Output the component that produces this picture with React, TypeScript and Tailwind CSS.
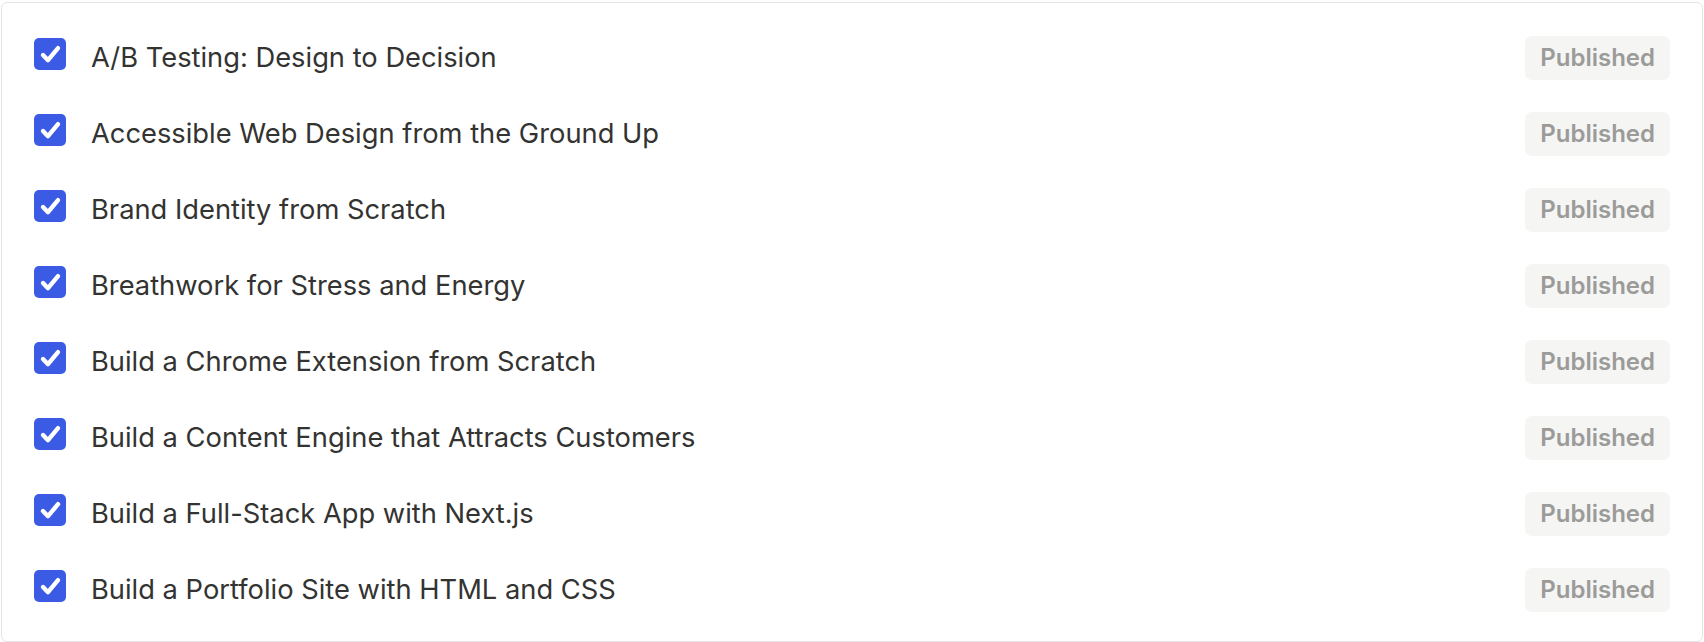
const courses = [
  'A/B Testing: Design to Decision',
  'Accessible Web Design from the Ground Up',
  'Brand Identity from Scratch',
  'Breathwork for Stress and Energy',
  'Build a Chrome Extension from Scratch',
  'Build a Content Engine that Attracts Customers',
  'Build a Full-Stack App with Next.js',
  'Build a Portfolio Site with HTML and CSS',
];

function CheckBox() {
  return (
    <div className="w-8 h-8 mb-2 rounded-[5px] bg-[#3b5be5] shrink-0">
      <svg viewBox="0 0 32 32" className="w-8 h-8">
        <path
          d="M9 17 L14 22.2 L24 10.2"
          fill="none"
          stroke="white"
          strokeWidth={4.4}
          strokeLinecap="round"
          strokeLinejoin="round"
        />
      </svg>
    </div>
  );
}

function CourseRow({ title }: { title: string }) {
  return (
    <div className="flex items-center h-[76px]">
      <CheckBox />
      <span className="ml-[25px] text-[27.3px] text-[#333331]">{title}</span>
      <span className="ml-auto flex items-center h-11 px-[15px] rounded-[7px] bg-[#f5f5f4] text-[24px] font-semibold text-[#9b9b99]">
        Published
      </span>
    </div>
  );
}

export default function App() {
  return (
    <div
      className="bg-white pt-[2px] px-[1px] pb-[1px]"
      style={{ fontFamily: 'Inter, "Noto Sans", sans-serif' }}
    >
      <div className="flex flex-col border border-[#e4e4e4] rounded-[6px] px-8 pt-[17px] pb-[13px]">
        {courses.map((c) => (
          <CourseRow key={c} title={c} />
        ))}
      </div>
    </div>
  );
}
